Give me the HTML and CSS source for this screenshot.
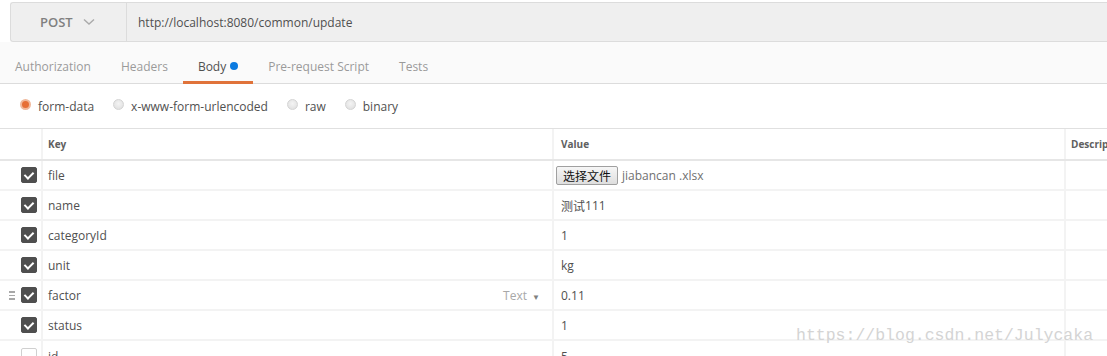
FILE: index.html
```html
<!DOCTYPE html>
<html lang="en">
<head>
  <meta charset="UTF-8">
  <title>Postman - form-data</title>
  <link rel="stylesheet" href="styles.css">
</head>
<body>

  <div class="request-bar">
    <div class="method">
      POST
      <svg class="chevron" width="12" height="8" viewBox="0 0 12 8"><path d="M1 1.5 L6 6 L11 1.5" fill="none" stroke="#aaa" stroke-width="1.4"/></svg>
    </div>
    <div class="url">http://localhost:8080/common/update</div>
  </div>

  <div class="tabs">
    <div class="tab">Authorization</div>
    <div class="tab">Headers</div>
    <div class="tab active">Body <span class="dot"></span></div>
    <div class="tab">Pre-request Script</div>
    <div class="tab">Tests</div>
  </div>

  <div class="modes">
    <label class="mode"><span class="radio checked"></span>form-data</label>
    <label class="mode"><span class="radio"></span>x-www-form-urlencoded</label>
    <label class="mode"><span class="radio"></span>raw</label>
    <label class="mode"><span class="radio"></span>binary</label>
  </div>

  <div class="params">
    <div class="row head">
      <div class="cell check"></div>
      <div class="cell">Key</div>
      <div class="cell">Value</div>
      <div class="cell">Descrip</div>
    </div>

    <div class="row">
      <div class="cell check"><span class="box on"></span></div>
      <div class="cell">file</div>
      <div class="cell"><span class="file-btn">选择文件</span><span class="file-name">jiabancan .xlsx</span></div>
      <div class="cell"></div>
    </div>
    <div class="row">
      <div class="cell check"><span class="box on"></span></div>
      <div class="cell">name</div>
      <div class="cell"><span class="cjk">测试</span>111</div>
      <div class="cell"></div>
    </div>
    <div class="row">
      <div class="cell check"><span class="box on"></span></div>
      <div class="cell">categoryId</div>
      <div class="cell">1</div>
      <div class="cell"></div>
    </div>
    <div class="row">
      <div class="cell check"><span class="box on"></span></div>
      <div class="cell">unit</div>
      <div class="cell">kg</div>
      <div class="cell"></div>
    </div>
    <div class="row">
      <div class="cell check"><span class="handle"></span><span class="box on"></span></div>
      <div class="cell key-hover">factor <span class="type">Text <span class="caret">&#9660;</span></span></div>
      <div class="cell">0.11</div>
      <div class="cell"></div>
    </div>
    <div class="row">
      <div class="cell check"><span class="box on"></span></div>
      <div class="cell">status</div>
      <div class="cell">1</div>
      <div class="cell"></div>
    </div>
    <div class="row last">
      <div class="cell check"><span class="box"></span></div>
      <div class="cell">id</div>
      <div class="cell">5</div>
      <div class="cell"></div>
    </div>
  </div>

  <div class="watermark">https://blog.csdn.net/Julycaka</div>

</body>
</html>
```

FILE: styles.css
```css
body {
  margin: 0;
  font-family: 'Open Sans', sans-serif;
  font-size: 12px;
  color: #505050;
  background-color: #ffffff;
  overflow: hidden;
  position: relative;
  height: 356px;
}

.request-bar {
  display: flex;
  height: 40px;
  box-sizing: border-box;
  margin: 2px 0 0 10px;
  background-color: #efefef;
  border: 1px solid #dcdcdc;
  border-right: none;
  border-radius: 3px 0 0 3px;
}

.method {
  width: 116px;
  display: flex;
  align-items: center;
  padding-left: 29px;
  box-sizing: border-box;
  font-size: 13px;
  font-weight: 600;
  color: #808080;
  border-right: 1px solid #dcdcdc;
}

.chevron {
  margin-left: 10px;
}

.url {
  display: flex;
  align-items: center;
  padding-left: 11px;
  color: #505050;
}

.tabs {
  display: flex;
  height: 42px;
  box-sizing: border-box;
  background-color: #fafafa;
  border-bottom: 1px solid #dcdcdc;
}

.tab {
  padding: 9px 15px 0;
  display: flex;
  align-items: center;
  color: #9a9a9a;
  font-size: 12px;
  border-bottom: 3px solid transparent;
  margin-bottom: -1px;
}

.tab.active {
  color: #505050;
  border-bottom-color: #e0733a;
}

.dot {
  display: inline-block;
  width: 8px;
  height: 8px;
  border-radius: 50%;
  background-color: #0b7ae0;
  margin-left: 4px;
}

.modes {
  display: flex;
  height: 44px;
  align-items: center;
  padding-left: 20px;
}

.mode {
  display: flex;
  align-items: center;
  margin-right: 19px;
  color: #505050;
}

.radio {
  width: 11px;
  height: 11px;
  border-radius: 50%;
  border: 1px solid #d4d4d4;
  background: radial-gradient(circle at 50% 40%, #f4f4f4, #dcdcdc);
  margin-right: 7px;
  box-sizing: border-box;
  margin-top: -3px;
}

.radio.checked {
  border: 2px solid #f0b89a;
  background: #e66f36;
}

.params {
  border-top: 1px solid #e0e0e0;
}

.row {
  display: grid;
  grid-template-columns: 41px 511px 512px 1fr;
  height: 30px;
  box-sizing: border-box;
  border-bottom: 2px solid #f3f3f3;
}

.row.head {
  height: 32px;
  border-bottom: 2px solid #e6e6e6;
  font-size: 10px;
  font-weight: 700;
  color: #606060;
}

.row.last {
  border-bottom: none;
}

.cell {
  display: flex;
  align-items: center;
  padding-left: 5px;
  border-left: 2px solid #f3f3f3;
  white-space: nowrap;
  overflow: hidden;
}

.cell.check {
  border-left: none;
  padding-left: 0;
  justify-content: flex-end;
  padding-right: 4px;
}

.row .cell:nth-child(3) {
  padding-left: 7px;
}

.box {
  width: 16px;
  height: 16px;
  border-radius: 2px;
  box-sizing: border-box;
  border: 1px solid #d0d0d0;
  background-color: #ffffff;
  position: relative;
}

.box.on {
  background-color: #4f4f4f;
  border-color: #4f4f4f;
}

.box.on::after {
  content: '';
  position: absolute;
  left: 4px;
  top: 2px;
  width: 4px;
  height: 7px;
  border: solid #ffffff;
  border-width: 0 2px 2px 0;
  transform: rotate(45deg);
}

.handle {
  width: 6px;
  height: 9px;
  margin-right: 6px;
  background: repeating-linear-gradient(#a8a8a8 0 1.5px, transparent 1.5px 3.5px);
}

.key-hover {
  justify-content: space-between;
  padding-right: 12px;
}

.type {
  color: #a8a8a8;
}

.caret {
  font-size: 8px;
  color: #808080;
  margin-left: 2px;
}

.file-btn {
  font-family: 'Noto Sans CJK SC', sans-serif;
  font-size: 12px;
  color: #111111;
  padding: 0 6px;
  height: 19px;
  line-height: 18px;
  box-sizing: border-box;
  border: 1px solid #a0a0a0;
  border-radius: 2px;
  background: linear-gradient(#f6f6f6, #dedede);
  margin-left: -5px;
  margin-right: 4px;
}

.file-name {
  color: #707070;
}

.cjk {
  font-family: 'Noto Sans CJK SC', sans-serif;
  font-size: 12px;
}

.watermark {
  position: absolute;
  left: 796px;
  top: 326px;
  font-family: 'Liberation Mono', monospace;
  font-size: 16.5px;
  color: #d4d4d4;
}
```
